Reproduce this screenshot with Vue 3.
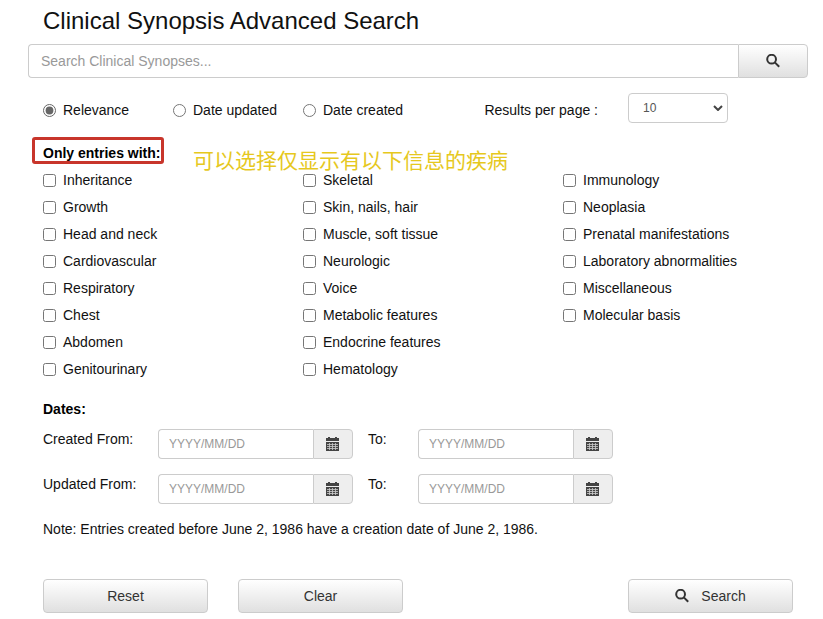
<script setup>

import { ref } from 'vue'

const search = ref('')
const sort = ref('relevance')
const limit = ref('10')
const checked = ref([])
const dates = ref({})

const sorts = [
    { id: 'relevance', label: 'Relevance' },
    { id: 'updated', label: 'Date updated' },
    { id: 'created', label: 'Date created' }
]

// one list per column
const columns = [
    ['Inheritance', 'Growth', 'Head and neck', 'Cardiovascular', 'Respiratory', 'Chest', 'Abdomen', 'Genitourinary'],
    ['Skeletal', 'Skin, nails, hair', 'Muscle, soft tissue', 'Neurologic', 'Voice', 'Metabolic features', 'Endocrine features', 'Hematology'],
    ['Immunology', 'Neoplasia', 'Prenatal manifestations', 'Laboratory abnormalities', 'Miscellaneous', 'Molecular basis']
]

const ranges = [
    { id: 'created', label: 'Created From:' },
    { id: 'updated', label: 'Updated From:' }
]

function clearForm() {
    search.value = ''
    checked.value = []
    dates.value = {}
}

function resetForm() {
    clearForm()
    sort.value = 'relevance'
    limit.value = '10'
}

</script>

<template>
    <form class="page" @submit.prevent>
        <h1>Clinical Synopsis Advanced Search</h1>

        <div class="searchBar">
            <input type="text" v-model="search" placeholder="Search Clinical Synopses..." aria-label="Search Clinical Synopses" />
            <button type="submit" class="btn" aria-label="Search">
                <svg class="icon" viewBox="0 0 14 14"><circle cx="5.6" cy="5.2" r="4.4" /><path d="M8.8 8.4L13.2 12.8" /></svg>
            </button>
        </div>

        <div class="grid options">
            <div v-for="s of sorts" :key="s.id" class="col2 choice">
                <input type="radio" name="sort" :id="s.id" :value="s.id" v-model="sort" />
                <label :for="s.id">{{ s.label }}</label>
            </div>
            <label for="limit" class="col3 limitLabel">Results per page :</label>
            <div class="col3 limitField">
                <select id="limit" v-model="limit">
                    <option>10</option>
                    <option>20</option>
                    <option>50</option>
                    <option>100</option>
                </select>
                <svg class="chevron" viewBox="0 0 10 6"><path d="M1 1L5 5L9 1" /></svg>
            </div>
        </div>

        <div class="heading">
            <strong class="marked">Only entries with:</strong>
            <span class="note">可以选择仅显示有以下信息的疾病</span>
        </div>
        <div class="grid">
            <ul v-for="(items, i) of columns" :key="i" class="col4">
                <li v-for="item of items" :key="item" class="choice">
                    <input type="checkbox" :id="item" :value="item" v-model="checked" />
                    <label :for="item">{{ item }}</label>
                </li>
            </ul>
        </div>

        <div class="dates">
            <strong>Dates:</strong>
            <div v-for="r of ranges" :key="r.id" class="grid range">
                <template v-for="end of ['from', 'to']" :key="end">
                    <label :for="r.id + end" :class="end == 'from' ? 'col2' : 'col1'">{{ end == 'from' ? r.label : 'To:' }}</label>
                    <div class="dateField">
                        <input type="text" :id="r.id + end" v-model="dates[r.id + end]" placeholder="YYYY/MM/DD" />
                        <span class="addon">
                            <svg viewBox="0 0 14 14">
                                <path d="M0 1h2V0h2v1h5V0h2v1h2v3H0z" />
                                <path d="M0 5h13v9H0z" />
                                <path class="lines" d="M1 7.5h11M1 9.5h11M1 11.5h11M3.5 6v7M6.5 6v7M9.5 6v7" />
                            </svg>
                        </span>
                    </div>
                </template>
            </div>
            <p>Note: Entries created before June 2, 1986 have a creation date of June 2, 1986.</p>
        </div>

        <div class="grid actions">
            <div class="col3"><button type="button" class="btn" @click="resetForm">Reset</button></div>
            <div class="col3"><button type="button" class="btn" @click="clearForm">Clear</button></div>
            <div class="col3 last">
                <button type="submit" class="btn">
                    <svg class="icon" viewBox="0 0 14 14"><circle cx="5.6" cy="5.2" r="4.4" /><path d="M8.8 8.4L13.2 12.8" /></svg>
                    Search
                </button>
            </div>
        </div>
    </form>
</template>

<style>
body {
    margin: 0;
    background-color: #fff;
}
</style>

<style scoped>

*, *::before {
    box-sizing: border-box;
}

.page {
    padding: 4px 15px 6px 28px;
    font-family: "Liberation Sans", Arial, "Noto Sans CJK SC", sans-serif;
    font-size: 14px;
    line-height: 20px;
    color: #111;
}

h1 {
    margin: 0 0 6px;
    padding-left: 15px;
    font-size: 24px;
    line-height: 34px;
    font-weight: 400;
}

input, select, button {
    font-family: inherit;
}

ul {
    margin: 0;
    list-style-type: none;
}

input::placeholder {
    color: #999;
    opacity: 1;
}

.grid {
    display: grid;
    grid-template-columns: repeat(12, 1fr);
}

.col1, .col2, .col3, .col4 {
    min-width: 0;
    padding: 0 0 0 15px;
    white-space: nowrap;
}

.col2 {
    grid-column: span 2;
}

.col3 {
    grid-column: span 3;
    padding-right: 15px;
}

.col4 {
    grid-column: span 4;
}

.searchBar {
    display: flex;
    height: 34px;
}

.searchBar input {
    flex: 1;
    min-width: 0;
    padding: 6px 12px;
    font-size: 14px;
    border: 1px solid #ccc;
    border-right: none;
    border-radius: 4px 0 0 4px;
}

.searchBar .btn {
    width: 70px;
    border-radius: 0 4px 4px 0;
}

.btn {
    display: flex;
    align-items: center;
    justify-content: center;
    gap: 12px;
    width: 100%;
    height: 34px;
    padding: 0;
    font-size: 14px;
    color: #333;
    border: 1px solid #ccc;
    border-radius: 4px;
    background: linear-gradient(#fff, #e0e0e0);
}

.icon {
    width: 14px;
    height: 14px;
    fill: none;
    stroke: #333;
    stroke-width: 2;
}

.options {
    height: 30px;
    margin-top: 15px;
}

.choice {
    display: flex;
    align-items: center;
    gap: 7px;
}

.choice input {
    flex: none;
    width: 13px;
    height: 13px;
    margin: 0;
    accent-color: #666;
}

.options .choice, .limitLabel {
    padding-top: 4px;
}

.limitLabel {
    line-height: 26px;
    text-align: right;
}

.limitField {
    display: grid;
    justify-content: start;
    align-items: center;
}

.limitField > * {
    grid-area: 1 / 1;
}

select {
    width: 100px;
    height: 30px;
    padding: 0 14px;
    font-size: 12px;
    color: #555;
    border: 1px solid #ccc;
    border-radius: 4px;
    background-color: #fff;
    appearance: none;
}

.chevron {
    justify-self: end;
    width: 10px;
    height: 6px;
    margin-right: 5px;
    fill: none;
    stroke: #444;
    stroke-width: 2;
    pointer-events: none;
}

.heading {
    position: relative;
    margin-top: 20px;
    padding-left: 15px;
}

.heading strong, .dates strong {
    color: #000;
}

/* red frame drawn over the heading */
.marked::before {
    content: "";
    position: absolute;
    top: -6px;
    left: 4px;
    width: 132px;
    height: 27px;
    border: 3px solid #c8352b;
    border-radius: 3px;
}

.note {
    position: absolute;
    top: 5px;
    left: 165px;
    font-family: "Noto Sans CJK SC", sans-serif;
    font-size: 21px;
    line-height: 22px;
    color: #e6c81e;
    white-space: nowrap;
}

.heading + .grid {
    margin-top: 4px;
}

li {
    height: 27px;
}

li label {
    padding-bottom: 1px;
}

.dates {
    margin-top: 16px;
}

.dates strong, .dates p {
    display: block;
    margin: 0;
    padding-left: 15px;
}

.range {
    height: 30px;
    margin: 10px 0 15px;
}

.range + .range {
    margin-top: 0;
}

.dateField {
    grid-column: span 3;
    display: flex;
}

.dateField input {
    flex: 1;
    min-width: 0;
    padding: 5px 10px;
    font-size: 12px;
    border: 1px solid #ccc;
    border-right: none;
    border-radius: 4px 0 0 4px;
}

.addon {
    display: flex;
    align-items: center;
    justify-content: center;
    width: 40px;
    border: 1px solid #ccc;
    border-radius: 0 4px 4px 0;
    background-color: #eee;
}

.addon svg {
    width: 14px;
    height: 14px;
    fill: #444;
}

.addon .lines {
    fill: none;
    stroke: #ccc;
    stroke-width: 0.8;
}

.actions {
    margin-top: 40px;
}

.actions .last {
    grid-column: 10 / span 3;
}

</style>
